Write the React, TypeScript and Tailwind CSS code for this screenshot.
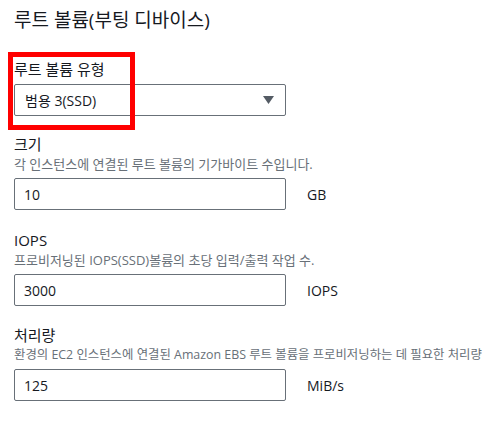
import React from "react";

const FONT = "font-['Open_Sans','Noto_Sans_CJK_KR',sans-serif]";

function Field({
  label,
  desc,
  value,
  unit,
  className,
  descSize = "text-[13px]",
}: {
  label: string;
  desc: string;
  value: string;
  unit: string;
  className?: string;
  descSize?: string;
}) {
  return (
    <div className={className}>
      <div className="h-[20px] text-[15px] leading-[20px] text-[#16191f]">{label}</div>
      <div className={`h-[20px] ${descSize} leading-[20px] text-[#687078] whitespace-nowrap`}>{desc}</div>
      <div className="mt-[4px] flex items-center gap-[21px]">
        <div className="w-[272px] h-[32px] border border-[#687078] rounded-[2px] flex items-center px-[9px] text-[14px] text-[#16191f]">
          {value}
        </div>
        <span className="text-[14px] text-[#16191f]">{unit}</span>
      </div>
    </div>
  );
}

export default function App() {
  return (
    <div className={`relative w-[497px] h-[428px] overflow-hidden bg-white pl-[14px] ${FONT}`}>
      <div className="pt-[8px] h-[34px] text-[19px] leading-[24px] text-[#16191f]">루트 볼륨(부팅 디바이스)</div>

      {/* annotation box */}
      <div className="absolute left-[8px] top-[52px] w-[127px] h-[78px] border-[5px] border-[#ff0000]" />

      <div className="mt-[25px]">
        <div className="h-[20px] text-[15px] leading-[20px] text-[#16191f]">루트 볼륨 유형</div>
        <div className="mt-[5px] w-[272px] h-[32px] border border-[#687078] rounded-[2px] flex items-center justify-between pl-[10px] pr-[11px] text-[14px] text-[#16191f]">
          <span>범용 3(SSD)</span>
          <svg width="11" height="8" viewBox="0 0 11 8">
            <path d="M0 0 H11 L5.5 8 Z" fill="#545b64" />
          </svg>
        </div>
      </div>

      <Field className="mt-[18px]" label="크기" desc="각 인스턴스에 연결된 루트 볼륨의 기가바이트 수입니다." value="10" unit="GB" />
      <Field
        className="mt-[20px]"
        label="IOPS"
        desc="프로비저닝된 IOPS(SSD)볼륨의 초당 입력/출력 작업 수."
        value="3000"
        unit="IOPS"
      />
      <Field
        className="mt-[19px]"
        label="처리량"
        desc="환경의 EC2 인스턴스에 연결된 Amazon EBS 루트 볼륨을 프로비저닝하는 데 필요한 처리량"
        descSize="text-[12.4px]"
        value="125"
        unit="MiB/s"
      />
    </div>
  );
}
